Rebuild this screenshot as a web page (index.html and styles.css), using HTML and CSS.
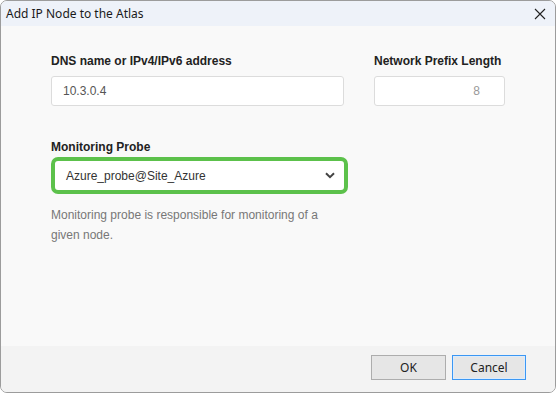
FILE: index.html
```html
<!DOCTYPE html>
<html>
<head>
<meta charset="utf-8">
<link rel="stylesheet" href="styles.css">
</head>
<body>
<div class="window">
  <div class="titlebar">
    <span class="title">Add IP Node to the Atlas</span>
    <svg class="close" width="12" height="12" viewBox="0 0 12 12"><path d="M1 1L11 11M11 1L1 11" stroke="#222" stroke-width="1.1" fill="none"/></svg>
  </div>
  <div class="content">
    <div class="row">
      <div class="field addr">
        <div class="label">DNS name or IPv4/IPv6 address</div>
        <div class="input">10.3.0.4</div>
      </div>
      <div class="field prefix">
        <div class="label">Network Prefix Length</div>
        <div class="input num">8</div>
      </div>
    </div>
    <div class="field probe">
      <div class="label">Monitoring Probe</div>
      <div class="select">
        <span>Azure_probe@Site_Azure</span>
        <svg class="chev" width="10" height="7" viewBox="0 0 10 7"><path d="M1 1.2L5 5.2L9 1.2" stroke="#444" stroke-width="2" fill="none"/></svg>
      </div>
      <div class="help">Monitoring probe is responsible for monitoring of a given node.</div>
    </div>
  </div>
  <div class="footer">
    <button class="btn">OK</button>
    <button class="btn primary">Cancel</button>
  </div>
</div>
</body>
</html>
```
FILE: styles.css
```css
html, body { margin: 0; padding: 0; background: #ffffff; }
.window {
  width: 556px; height: 393px; box-sizing: border-box;
  border: 1px solid #9c9c9c; border-radius: 7px; overflow: hidden;
  display: flex; flex-direction: column; background: #f9f9f9;
}
.titlebar {
  height: 25px; background: #eef2f9; display: flex; align-items: center;
  justify-content: space-between; padding: 0 9px 0 5px; flex: none;
}
.title { font-family: "Segoe UI", "Noto Sans", sans-serif; font-size: 12px; color: #1a1a1a; }
.close { margin-top: 1px; }
.content {
  flex: 1; padding: 28px 0 0 50px; font-family: "Liberation Sans", Arial, sans-serif;
}
.row { display: flex; gap: 30px; }
.label { font-weight: bold; font-size: 12px; color: #222; line-height: 14px; height: 14px; margin-bottom: 8px; }
.addr { width: 293px; }
.prefix { width: 131px; }
.input {
  box-sizing: border-box; height: 30px; border: 1px solid #dcdcdc; border-radius: 3px;
  background: #fff; font-size: 12px; color: #555; line-height: 28px; padding: 0 11px;
}
.input.num { text-align: right; color: #999; padding-right: 24px; }
.probe { margin-top: 34px; width: 297px; }
.probe .label { margin-bottom: 3px; }
.select {
  box-sizing: border-box; height: 37px; border: 4px solid #5cc14b; border-radius: 7px;
  background: #fff; display: flex; align-items: center; justify-content: space-between;
  padding: 0 9px 0 11px; font-size: 12px; color: #333;
}
.help { margin-top: 11px; font-size: 12px; color: #777; line-height: 20px; width: 280px; }
.footer {
  height: 46px; background: #f3f3f3; display: flex; justify-content: flex-end;
  align-items: flex-start; padding: 9px 29px 0 0; box-sizing: border-box; gap: 6px; flex: none;
}
.btn {
  width: 75px; height: 25px; box-sizing: border-box; border: 1px solid #adadad;
  background: #e6e6e6; font-family: "Segoe UI", "Noto Sans", sans-serif; font-size: 12px;
  color: #222; padding: 0; margin: 0;
}
.btn.primary { border: 1px solid #3c97f3; width: 74px; box-shadow: inset 0 0 0 1px #dcecfc; }
```
